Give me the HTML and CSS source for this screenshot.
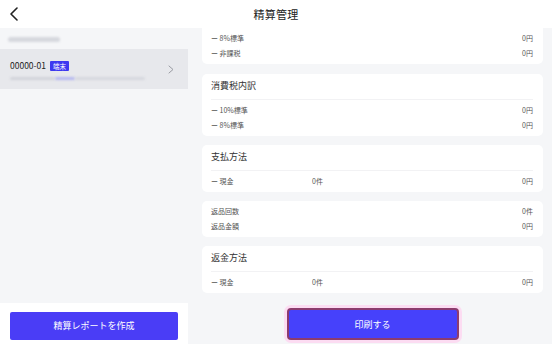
FILE: index.html
```html
<!DOCTYPE html>
<html lang="ja">
<head>
<meta charset="utf-8">
<link rel="stylesheet" href="styles.css">
</head>
<body>
<div class="app">
  <header class="header">
    <svg class="back" width="10" height="14" viewBox="0 0 10 14"><path d="M8 1 L2 7 L8 13" fill="none" stroke="#222" stroke-width="1.6" stroke-linecap="round" stroke-linejoin="round"/></svg>
    <div class="title">精算管理</div>
  </header>
  <div class="main">
    <aside class="side">
      <div class="side-top"><div class="blur b1"></div></div>
      <div class="term">
        <div class="term-info">
          <div class="term-line"><span class="term-id">00000-01</span><span class="badge">端末</span></div>
          <div class="blur-line"><div class="blur b2"></div><div class="blur b3"></div><div class="blur b4"></div></div>
        </div>
        <svg class="chev" width="6" height="9" viewBox="0 0 6 9"><path d="M1 1 L5 4.5 L1 8" fill="none" stroke="#9a9ca3" stroke-width="1" stroke-linecap="round" stroke-linejoin="round"/></svg>
      </div>
      <div class="side-fill"></div>
      <div class="side-foot"><button class="btn-primary">精算レポートを作成</button></div>
    </aside>
    <section class="content">
      <div class="card first">
        <div class="rows">
          <div class="row"><span class="lbl">ー 8%標準</span><span class="val">0円</span></div>
          <div class="row"><span class="lbl">ー 非課税</span><span class="val">0円</span></div>
        </div>
      </div>
      <div class="card">
        <div class="card-title">消費税内訳</div>
        <div class="rows">
          <div class="row"><span class="lbl">ー 10%標準</span><span class="val">0円</span></div>
          <div class="row"><span class="lbl">ー 8%標準</span><span class="val">0円</span></div>
        </div>
      </div>
      <div class="card">
        <div class="card-title">支払方法</div>
        <div class="rows">
          <div class="row"><span class="lbl w">ー 現金</span><span class="cnt">0件</span><span class="val">0円</span></div>
        </div>
      </div>
      <div class="card">
        <div class="rows">
          <div class="row"><span class="lbl">返品回数</span><span class="val">0件</span></div>
          <div class="row"><span class="lbl">返品金額</span><span class="val">0円</span></div>
        </div>
      </div>
      <div class="card">
        <div class="card-title">返金方法</div>
        <div class="rows">
          <div class="row"><span class="lbl w">ー 現金</span><span class="cnt">0件</span><span class="val">0円</span></div>
        </div>
      </div>
      <div class="print-wrap"><button class="btn-print">印刷する</button></div>
    </section>
  </div>
</div>
</body>
</html>
```
FILE: styles.css
```css
* { box-sizing: border-box; }
html, body { margin: 0; padding: 0; }
body {
  font-family: "Noto Sans CJK JP", "Noto Sans", sans-serif;
  color: #333;
  background: #f5f6f8;
  width: 552px;
  height: 344px;
  overflow: hidden;
}
.app { display: flex; flex-direction: column; height: 344px; }
.header {
  height: 28px;
  flex: none;
  background: #fff;
  display: flex;
  align-items: center;
  justify-content: center;
  position: relative;
}
.back { position: absolute; left: 9px; top: 7px; }
.title { font-size: 11px; color: #222; letter-spacing: 0.2px; }
.main { flex: 1; display: flex; min-height: 0; }
.side {
  width: 188px;
  flex: none;
  background: #f5f6f8;
  display: flex;
  flex-direction: column;
}
.side-top { height: 21px; padding: 9px 0 0 8px; }
.blur { background: #d6d8de; border-radius: 3px; filter: blur(1.2px); }
.b1 { width: 52px; height: 5px; }
.term {
  height: 40px;
  background: #e7e8ec;
  display: flex;
  align-items: center;
  padding: 0 14px 0 10px;
}
.term-info { flex: 1; display: flex; flex-direction: column; gap: 6px; padding-top: 3px; }
.term-line { display: flex; align-items: center; gap: 4px; height: 11px; }
.term-id { font-size: 8.5px; color: #222; line-height: 11px; }
.badge {
  background: #3d38f0;
  color: #fff;
  font-size: 6.5px;
  line-height: 10px;
  height: 10px;
  padding: 0 3px;
  border-radius: 1px;
}
.blur-line { display: flex; height: 4px; }
.b2 { width: 45px; height: 3px; background: #d2d4da; }
.b3 { width: 20px; height: 3px; background: #b6b9ef; }
.b4 { width: 70px; height: 3px; background: #d6d8de; }
.chev { flex: none; }
.side-fill { flex: 1; }
.side-foot { height: 41px; background: #fff; padding: 7px 10px 6px 10px; }
.btn-primary {
  width: 168px;
  height: 28px;
  border: none;
  border-radius: 2px;
  background: #4a3df6;
  color: #fff;
  font-family: inherit;
  font-size: 9px;
  padding: 0;
}
.content {
  flex: 1;
  padding: 0 9px 0 14px;
  display: flex;
  flex-direction: column;
  gap: 9px;
}
.card {
  background: #fff;
  border-radius: 5px;
  padding: 0 10px 0 9px;
}
.card.first { border-radius: 0 0 5px 5px; margin-bottom: 1px; }
.card-title {
  font-size: 9px;
  color: #333;
  height: 26px;
  line-height: 24px;
  border-bottom: 1px solid #f2f2f4;
}
.rows { padding: 2.5px 0 3.5px; }
.card-title + .rows { padding: 2px 0 4px; }
.row {
  display: flex;
  align-items: center;
  height: 15px;
  font-size: 7px;
  color: #555;
}
.lbl { flex: 1; }
.lbl.w { flex: none; width: 101px; }
.cnt { flex: 1; }
.val { flex: none; }
.print-wrap { display: flex; justify-content: center; padding-top: 6px; }
.btn-print {
  width: 172px;
  height: 32px;
  border: 2px solid #8c3c6e;
  border-radius: 4px;
  background: #4641fb;
  box-shadow: 0 0 0 3px #fcdcf2;
  color: #fff;
  font-family: inherit;
  font-size: 9px;
  padding: 0;
}
```
